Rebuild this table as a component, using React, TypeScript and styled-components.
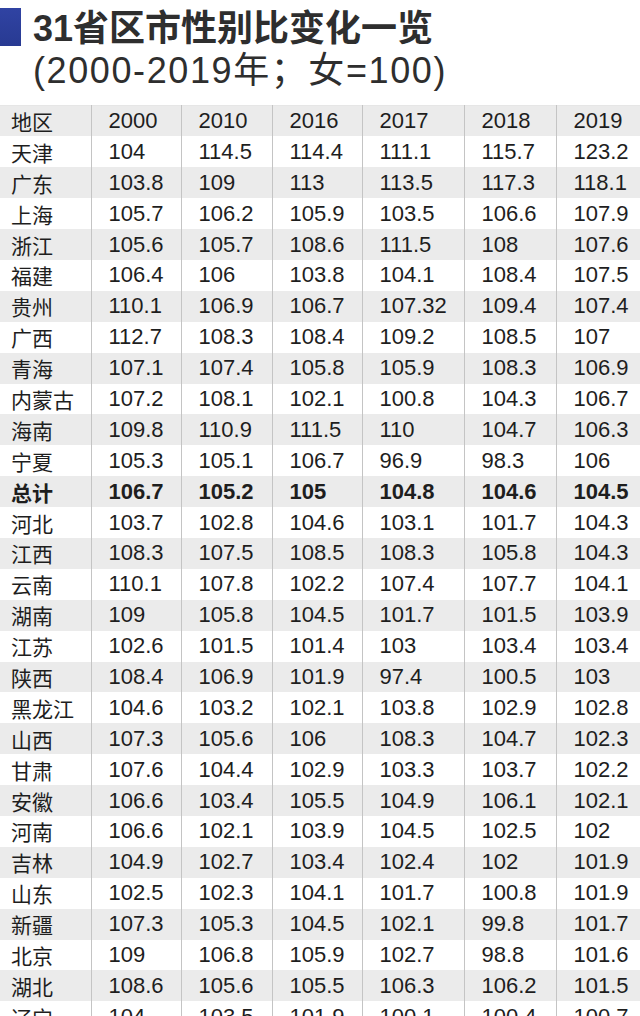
import styled, { createGlobalStyle } from "styled-components";

const GlobalStyle = createGlobalStyle`
    html, body {
        margin: 0;
        padding: 0;
        background: #ffffff;
    }
    body {
        font-family: "Liberation Sans", "Noto Sans CJK SC", sans-serif;
        color: #222;
    }
`;

const years = ["2000", "2010", "2016", "2017", "2018", "2019"];

const rows: [string, string[]][] = [
    ["天津", ["104", "114.5", "114.4", "111.1", "115.7", "123.2"]],
    ["广东", ["103.8", "109", "113", "113.5", "117.3", "118.1"]],
    ["上海", ["105.7", "106.2", "105.9", "103.5", "106.6", "107.9"]],
    ["浙江", ["105.6", "105.7", "108.6", "111.5", "108", "107.6"]],
    ["福建", ["106.4", "106", "103.8", "104.1", "108.4", "107.5"]],
    ["贵州", ["110.1", "106.9", "106.7", "107.32", "109.4", "107.4"]],
    ["广西", ["112.7", "108.3", "108.4", "109.2", "108.5", "107"]],
    ["青海", ["107.1", "107.4", "105.8", "105.9", "108.3", "106.9"]],
    ["内蒙古", ["107.2", "108.1", "102.1", "100.8", "104.3", "106.7"]],
    ["海南", ["109.8", "110.9", "111.5", "110", "104.7", "106.3"]],
    ["宁夏", ["105.3", "105.1", "106.7", "96.9", "98.3", "106"]],
    ["总计", ["106.7", "105.2", "105", "104.8", "104.6", "104.5"]],
    ["河北", ["103.7", "102.8", "104.6", "103.1", "101.7", "104.3"]],
    ["江西", ["108.3", "107.5", "108.5", "108.3", "105.8", "104.3"]],
    ["云南", ["110.1", "107.8", "102.2", "107.4", "107.7", "104.1"]],
    ["湖南", ["109", "105.8", "104.5", "101.7", "101.5", "103.9"]],
    ["江苏", ["102.6", "101.5", "101.4", "103", "103.4", "103.4"]],
    ["陕西", ["108.4", "106.9", "101.9", "97.4", "100.5", "103"]],
    ["黑龙江", ["104.6", "103.2", "102.1", "103.8", "102.9", "102.8"]],
    ["山西", ["107.3", "105.6", "106", "108.3", "104.7", "102.3"]],
    ["甘肃", ["107.6", "104.4", "102.9", "103.3", "103.7", "102.2"]],
    ["安徽", ["106.6", "103.4", "105.5", "104.9", "106.1", "102.1"]],
    ["河南", ["106.6", "102.1", "103.9", "104.5", "102.5", "102"]],
    ["吉林", ["104.9", "102.7", "103.4", "102.4", "102", "101.9"]],
    ["山东", ["102.5", "102.3", "104.1", "101.7", "100.8", "101.9"]],
    ["新疆", ["107.3", "105.3", "104.5", "102.1", "99.8", "101.7"]],
    ["北京", ["109", "106.8", "105.9", "102.7", "98.8", "101.6"]],
    ["湖北", ["108.6", "105.6", "105.5", "106.3", "106.2", "101.5"]],
    ["辽宁", ["104", "103.5", "101.9", "100.1", "100.4", "100.7"]],
];

const colWidths = [91, 90, 91, 90, 102, 92, 84];

const Page = styled.div`
    width: 640px;
    height: 1016px;
    overflow: hidden;
    background: #fff;
`;

const Heading = styled.header`
    display: flex;
    align-items: flex-start;
    gap: 12px;
    padding: 8px 0 0 0;
    height: 105px;
    box-sizing: border-box;
`;

const Marker = styled.div`
    width: 21px;
    height: 38px;
    flex-shrink: 0;
    background: linear-gradient(180deg, #3043a3 0%, #283a92 100%);
`;

const TitleBlock = styled.div`
    display: flex;
    flex-direction: column;
    font-family: "Liberation Sans", "Noto Sans CJK SC", sans-serif;
    color: #2e2e2e;
    font-size: 36px;
    line-height: 42px;
`;

const TitleLine = styled.div<{ $wide?: boolean }>`
    font-weight: ${(p) => (p.$wide ? 400 : 700)};
    letter-spacing: ${(p) => (p.$wide ? "1.6px" : "0")};
    white-space: nowrap;
`;

const Table = styled.table`
    width: 640px;
    table-layout: fixed;
    border-collapse: collapse;
    border-top: 1px solid #e6e6e6;
`;

const Row = styled.tr<{ $shaded: boolean; $total?: boolean }>`
    height: 30.9px;
    background: ${(p) => (p.$shaded ? "#ebebeb" : "#ffffff")};
    font-weight: ${(p) => (p.$total ? 700 : 400)};
`;

const Cell = styled.td<{ $first?: boolean }>`
    padding: 0 0 0 ${(p) => (p.$first ? "11px" : "17px")};
    border-left: ${(p) => (p.$first ? "none" : "1px solid #c4c4c4")};
    font-family: ${(p) =>
        p.$first
            ? '"Noto Sans CJK SC", sans-serif'
            : '"Liberation Sans", "Noto Sans CJK SC", sans-serif'};
    font-size: ${(p) => (p.$first ? "21px" : "22px")};
    line-height: 30px;
    color: #1e1e1e;
    white-space: nowrap;
    overflow: hidden;
    vertical-align: middle;
`;

const App = () => {
    return (
        <Page>
            <GlobalStyle />
            <Heading>
                <Marker />
                <TitleBlock>
                    <TitleLine>31省区市性别比变化一览</TitleLine>
                    <TitleLine $wide>(2000-2019年；女=100)</TitleLine>
                </TitleBlock>
            </Heading>
            <Table>
                <colgroup>
                    {colWidths.map((w, i) => (
                        <col key={i} style={{ width: w }} />
                    ))}
                </colgroup>
                <tbody>
                    <Row $shaded>
                        <Cell $first>地区</Cell>
                        {years.map((y) => (
                            <Cell key={y}>{y}</Cell>
                        ))}
                    </Row>
                    {rows.map(([name, vals], i) => (
                        <Row key={name} $shaded={i % 2 === 1} $total={name === "总计"}>
                            <Cell $first>{name}</Cell>
                            {vals.map((v, j) => (
                                <Cell key={j}>{v}</Cell>
                            ))}
                        </Row>
                    ))}
                </tbody>
            </Table>
        </Page>
    );
};

export default App;
